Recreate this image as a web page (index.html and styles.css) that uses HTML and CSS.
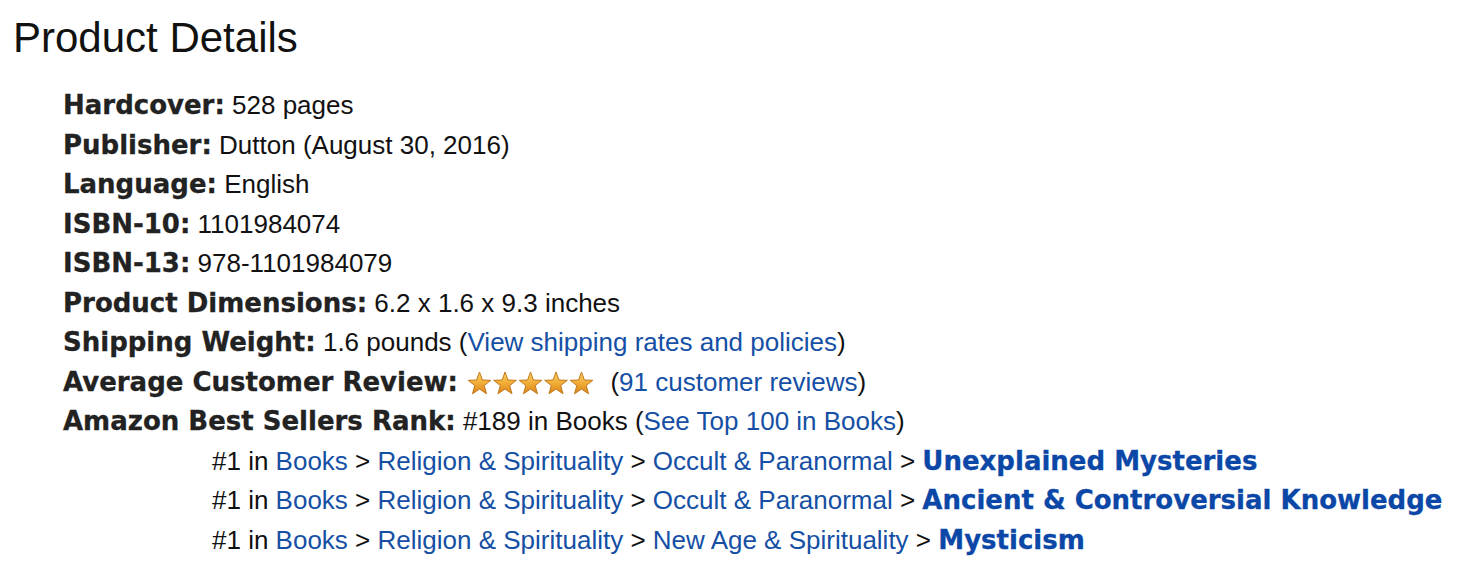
FILE: index.html
```html
<!DOCTYPE html>
<html>
<head>
<meta charset="utf-8">
<link rel="stylesheet" href="styles.css">
</head>
<body>
<div class="details">
  <h2 class="title">Product Details</h2>
  <ul class="list">
    <li><b class="lbl">Hardcover:</b> 528 pages</li>
    <li><b class="lbl">Publisher:</b> Dutton (August 30, 2016)</li>
    <li><b class="lbl">Language:</b> English</li>
    <li><b class="lbl">ISBN-10:</b> 1101984074</li>
    <li><b class="lbl">ISBN-13:</b> 978-1101984079</li>
    <li><b class="lbl">Product Dimensions:</b> 6.2 x 1.6 x 9.3 inches</li>
    <li><b class="lbl">Shipping Weight:</b> 1.6 pounds (<a class="lnk" href="#">View shipping rates and policies</a>)</li>
    <li><b class="lbl">Average Customer Review:</b> <svg class="stars" width="128" height="26" viewBox="0 0 128 26">
        <defs>
          <linearGradient id="sg" x1="0" y1="0" x2="0" y2="1">
            <stop offset="0" stop-color="#fbd36a"/>
            <stop offset="0.55" stop-color="#f0a933"/>
            <stop offset="1" stop-color="#d9841c"/>
          </linearGradient>
          <polygon id="st" points="12.5,1 15.4,9 23.8,9.3 17.2,14.5 19.5,22.8 12.5,18 5.5,22.8 7.8,14.5 1.2,9.3 9.6,9"/>
        </defs>
        <g stroke="#c27818" stroke-width="1" stroke-linejoin="round">
          <use href="#st" x="0" y="1" fill="url(#sg)"/>
          <use href="#st" x="25.5" y="1" fill="url(#sg)"/>
          <use href="#st" x="51" y="1" fill="url(#sg)"/>
          <use href="#st" x="76.5" y="1" fill="url(#sg)"/>
          <use href="#st" x="102" y="1" fill="url(#sg)"/>
        </g>
      </svg> (<a class="lnk" href="#">91 customer reviews</a>)</li>
    <li><b class="lbl">Amazon Best Sellers Rank:</b> #189 in Books (<a class="lnk" href="#">See Top 100 in Books</a>)
      <ul class="ranks">
        <li>#1 in <a class="lnk" href="#">Books</a> &gt; <a class="lnk" href="#">Religion &amp; Spirituality</a> &gt; <a class="lnk" href="#">Occult &amp; Paranormal</a> &gt; <a class="lnk strong" href="#">Unexplained Mysteries</a></li>
        <li>#1 in <a class="lnk" href="#">Books</a> &gt; <a class="lnk" href="#">Religion &amp; Spirituality</a> &gt; <a class="lnk" href="#">Occult &amp; Paranormal</a> &gt; <a class="lnk strong" href="#">Ancient &amp; Controversial Knowledge</a></li>
        <li>#1 in <a class="lnk" href="#">Books</a> &gt; <a class="lnk" href="#">Religion &amp; Spirituality</a> &gt; <a class="lnk" href="#">New Age &amp; Spirituality</a> &gt; <a class="lnk strong" href="#">Mysticism</a></li>
      </ul>
    </li>
  </ul>
</div>
</body>
</html>
```
FILE: styles.css
```css
html, body {
  margin: 0;
  padding: 0;
  background: #ffffff;
}
body {
  font-family: "Liberation Sans", Arial, sans-serif;
  color: #111111;
}
.details {
  padding: 14px 0 0 13px;
}
.title {
  margin: 0;
  font-weight: normal;
  font-size: 42px;
  line-height: 48px;
  color: #111111;
}
.list {
  list-style: none;
  margin: 24px 0 0 0;
  padding: 0 0 0 50px;
  font-size: 26px;
  line-height: 39.5px;
}
.list li {
  margin: 0;
  padding: 0;
}
.lbl {
  font-family: "DejaVu Sans", Verdana, sans-serif;
  font-weight: bold;
  font-size: 26px;
  color: #222222;
  -webkit-text-stroke: 0.3px #222222;
}
.lnk {
  color: #1550a5;
  text-decoration: none;
}
.strong {
  font-family: "DejaVu Sans", Verdana, sans-serif;
  font-weight: bold;
  font-size: 26px;
  color: #0b47a6;
  -webkit-text-stroke: 0.3px #0b47a6;
}
.stars {
  vertical-align: -5px;
  margin-left: 2px;
  margin-right: 8px;
}
.ranks {
  list-style: none;
  margin: 0;
  padding: 0 0 0 149px;
}
```
